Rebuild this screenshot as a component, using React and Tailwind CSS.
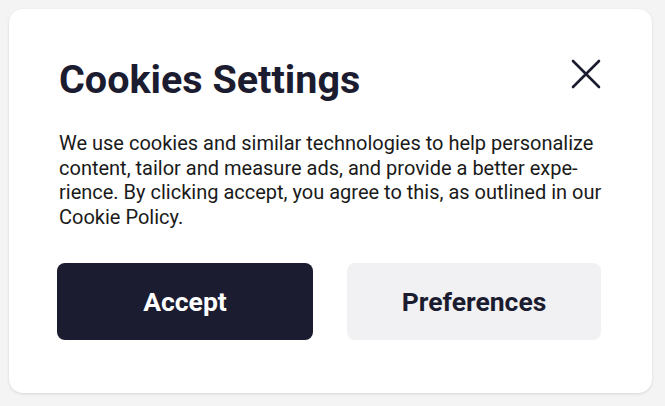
import React from "react";

const CookieSettings = () => {
  return (
    <div className="min-h-screen bg-[#f4f4f4] p-[9px] pr-[13px] font-['Roboto',sans-serif]">
      <div className="h-[384px] rounded-[14px] bg-white shadow-[0_1px_3px_rgba(0,0,0,0.12)] px-[48px] pt-[44px]">
        <div className="flex items-start justify-between">
          <h1 className="text-[39.5px] leading-[54px] font-bold text-[#1c1c30] pl-[2px]">
            Cookies Settings
          </h1>
          <button className="mt-[5px] mr-[2px] text-[#1c1c30]">
            <svg width="32" height="32" viewBox="0 0 32 32" fill="none" stroke="currentColor" strokeWidth="2.6" strokeLinecap="round">
              <path d="M3 3L29 29M29 3L3 29" />
            </svg>
          </button>
        </div>
        <p className="mt-[24px] pl-[2px] text-[20px] leading-[24.5px] text-[#1a1a1a] w-[552px]">
          We use cookies and similar technologies to help personalize content, tailor and measure ads, and provide a better expe&shy;rience. By clicking accept, you agree to this, as outlined in our Cookie Policy.
        </p>
        <div className="mt-[34px] grid grid-cols-[256px_254px] gap-[34px]">
          <button className="h-[77px] rounded-[8px] bg-[#1c1c30] text-white text-[26.5px] font-bold">
            Accept
          </button>
          <button className="h-[77px] rounded-[8px] bg-[#f1f1f3] text-[#1c1c30] text-[26.5px] font-bold">
            Preferences
          </button>
        </div>
      </div>
    </div>
  );
};

export default CookieSettings;
